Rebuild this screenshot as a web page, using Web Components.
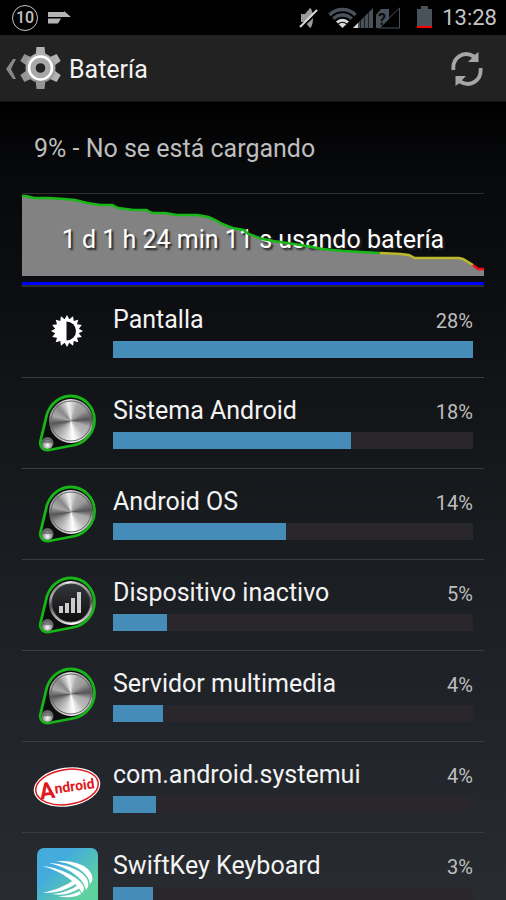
<!DOCTYPE html>
<html lang="es">
<head>
<meta charset="utf-8">
<meta name="viewport" content="width=device-width, initial-scale=1">
<title>Batería</title>
<style>
  html {
    height: 100%;
    background: #000;
  }
  body {
    margin: 0;
    height: 100%;
    overflow: hidden;
    color: #f3f3f3;
    font-family: Roboto, "Noto Sans", sans-serif;
    font-size: 25px;
    line-height: 32px;
  }
</style>
</head>
<body>
<battery-screen>
  <status-bar slot="status" time="13:28" count="10"></status-bar>
  <action-bar slot="header">Batería</action-bar>
  <battery-history status="9% - No se está cargando">1 d 1 h 24 min 11 s usando batería</battery-history>
  <battery-list>
    <battery-item name="Pantalla" percent="28" level="100"><brightness-icon slot="icon"></brightness-icon></battery-item>
    <battery-item name="Sistema Android" percent="18" level="66"><dial-icon slot="icon"></dial-icon></battery-item>
    <battery-item name="Android OS" percent="14" level="48"><dial-icon slot="icon"></dial-icon></battery-item>
    <battery-item name="Dispositivo inactivo" percent="5" level="15"><dial-icon slot="icon" signal></dial-icon></battery-item>
    <battery-item name="Servidor multimedia" percent="4" level="14"><dial-icon slot="icon"></dial-icon></battery-item>
    <battery-item name="com.android.systemui" percent="4" level="12"><android-icon slot="icon"></android-icon></battery-item>
    <battery-item name="SwiftKey Keyboard" percent="3" level="11"><swiftkey-icon slot="icon"></swiftkey-icon></battery-item>
  </battery-list>
</battery-screen>

<script>
  // Attach an open shadow root and fill it from a template
  function render(host, html) {
    const template = document.createElement("template");
    template.innerHTML = html;
    host.attachShadow({ mode: "open" }).appendChild(template.content.cloneNode(true));
  }

  class BatteryScreen extends HTMLElement {
    connectedCallback() {
      render(this, `
        <style>
          :host {
            display: flex;
            flex-direction: column;
            height: 100%;
          }
          main {
            flex: 1;
            min-height: 0;
            overflow: hidden;
            padding: 0 22px;
            background: linear-gradient(#000 0, #07080a 8%, #0e0f12 27%, #14171a 42%, #1b1e22 60%, #22262c 82%, #282c31 100%);
          }
        </style>
        <slot name="status"></slot>
        <slot name="header"></slot>
        <main><slot></slot></main>
      `);
    }
  }

  class StatusBar extends HTMLElement {
    connectedCallback() {
      render(this, `
        <style>
          :host {
            display: flex;
            justify-content: space-between;
            height: 35px;
            padding: 0 9px 0 12px;
            background: #000;
            color: #c4c4c4;
          }
          .group {
            display: flex;
            align-items: center;
          }
          .left { gap: 10px; }
          .count {
            box-sizing: border-box;
            width: 26px;
            height: 26px;
            border: 1px solid #c4c4c4;
            border-radius: 50%;
            font-size: 16px;
            font-weight: 500;
            line-height: 24px;
            text-align: center;
          }
          .battery { margin: 0 10px 0 16px; }
          time {
            font-size: 22px;
            line-height: 24px;
          }
        </style>
        <div class="group left">
          <span class="count">${this.getAttribute("count")}</span>
          <svg width="23" height="14" viewBox="0 0 23 14" fill="#b4b4b4">
            <path d="M0 1H16V0L23 6H0Z"/>
            <path d="M0 7.500H13L10 12.500H0Z"/>
          </svg>
        </div>
        <div class="group">
          <svg width="102" height="24" viewBox="0 0 102 24">
            <!-- muted speaker -->
            <path d="M2 8H6L11 2C15 4 15 20 11 22L6 16H2Z" fill="#9a9a9a"/>
            <path d="M1 23L20 5" stroke="#000" stroke-width="2"/>
            <path d="M1 21L18 4" stroke="#d8d8d8" stroke-width="2"/>
            <!-- wifi, one band lit -->
            <g fill="none">
              <path d="M30.500 9A18.400 18.400 0 0 1 56.500 9" stroke="#49525a" stroke-width="3.500"/>
              <path d="M34.300 12.800A13 13 0 0 1 52.700 12.800" stroke="#49525a" stroke-width="3.500"/>
              <path d="M38 16.500A8 8 0 0 1 49 16.500" stroke="#d8d8d8" stroke-width="3"/>
            </g>
            <path d="M39.700 18.200A5.400 5.400 0 0 1 47.300 18.200L43.500 22Z" fill="#d8d8d8"/>
            <!-- mobile signal -->
            <path d="M54 22L74 2V22Z" fill="#49525a"/>
            <path d="M54 22L59 17V22Z" fill="#d8d8d8"/>
            <path d="M61.500 14V22M65.500 10V22M69.500 6V22" stroke="#1c2126"/>
            <!-- unknown sim -->
            <path d="M77 9L82 3H90V13L81 22H77Z" fill="#49525a"/>
            <path d="M80 22L100.500 2V22Z" fill="none" stroke="#49525a"/>
            <text x="79" y="19" font-size="16" font-weight="700" fill="#0b0d0f">?</text>
          </svg>
          <svg class="battery" width="15" height="24" viewBox="0 0 15 24">
            <path d="M0 3H4V0H11V3H15V22H0Z" fill="#49525a"/>
            <path d="M0 20H15V22H0Z" fill="#f00"/>
          </svg>
          <time>${this.getAttribute("time")}</time>
        </div>
      `);
    }
  }

  class ActionBar extends HTMLElement {
    connectedCallback() {
      render(this, `
        <style>
          :host {
            display: flex;
            align-items: center;
            justify-content: space-between;
            height: 66px;
            padding: 0 22px 0 6px;
            background: #222;
            border-bottom: 1px solid #111;
          }
          a {
            display: flex;
            align-items: center;
          }
          h1 {
            flex: 1;
            margin: 4px 0 0 8px;
            font-size: 25px;
            font-weight: 400;
          }
          button {
            display: flex;
            padding: 0;
            border: 0;
            background: none;
          }
        </style>
        <a href="#" aria-label="Atrás">
          <svg width="14" height="44" viewBox="0 0 14 44">
            <path d="M7 13H10L5 23L10 33H7L0 23Z" fill="#888"/>
          </svg>
          <svg width="41" height="44" viewBox="0 0 41 44">
            <defs>
              <linearGradient id="steel" x2="0" y2="1">
                <stop offset="0" stop-color="#b4b4b4"/>
                <stop offset="1" stop-color="#929292"/>
              </linearGradient>
            </defs>
            <g fill="url(#steel)">
              <path d="M15.500 10L16.500 1H24.500L25.500 10V34L24.500 43H16.500L15.500 34Z"/>
              <path d="M15.500 10L16.500 1H24.500L25.500 10V34L24.500 43H16.500L15.500 34Z" transform="rotate(60 20.500 22)"/>
              <path d="M15.500 10L16.500 1H24.500L25.500 10V34L24.500 43H16.500L15.500 34Z" transform="rotate(120 20.500 22)"/>
              <circle cx="20.500" cy="22" r="15"/>
            </g>
            <circle cx="20.500" cy="22" r="11.500" fill="#a8a8a8" stroke="#fff" stroke-width="2.500"/>
            <circle cx="20.500" cy="22" r="4.800" fill="#222"/>
          </svg>
        </a>
        <h1><slot></slot></h1>
        <button type="button" aria-label="Actualizar">
          <svg width="34" height="36" viewBox="0 0 34 36">
            <g id="half">
              <path d="M3.500 20C2 8 13 0 24 6.500" fill="none" stroke="#a6a6a6" stroke-width="3.800"/>
              <path d="M28.500 2V12H18L21 9L24.500 5Z" fill="#a6a6a6"/>
            </g>
            <use href="#half" transform="rotate(180 17 19)"/>
          </svg>
        </button>
      `);
    }
  }

  class BatteryHistory extends HTMLElement {
    connectedCallback() {
      // Charge level over time, split where the colour of the line changes
      const good = "0,2 4,2 12,4 26,4 42,5 53,6 65,9 78,11 90,11 96,14 111,16 124,16 130,19 143,19 154,21 175,21 186,23 193,26 200,30 210,34 221,36 226,40 240,45 251,47 278,51 300,55 320,57 357,59";
      const low = "357,59 378,60 386,61 392,64 436,64 440,65 450,71";
      const critical = "450,71 455,75 461,75";

      render(this, `
        <style>
          :host { display: block; }
          p {
            margin: 0;
            padding: 31px 12px 28px;
            color: #bebebe;
          }
          figure {
            display: grid;
            align-items: center;
            height: 82px;
            margin: 0;
            padding-bottom: 6px;
            border-top: 1px solid #2c2f32;
          }
          figure > * { grid-area: 1 / 1; }
          figcaption {
            padding-top: 10px;
            color: #fff;
            text-align: center;
            text-shadow: 2px 2px 2px #222;
            white-space: nowrap;
          }
          svg {
            width: 100%;
            height: 82px;
          }
          .charging {
            height: 3px;
            background: #00f;
            border-bottom: 2px solid #2c2f32;
          }
        </style>
        <p>${this.getAttribute("status")}</p>
        <figure>
          <svg viewBox="0 0 461 82" preserveAspectRatio="none">
            <polygon points="${good} ${low} ${critical} 461,82 0,82" fill="#828282"/>
          </svg>
          <figcaption><slot></slot></figcaption>
          <svg viewBox="0 0 461 82" preserveAspectRatio="none" fill="none" stroke-width="2.500">
            <polyline points="${good}" stroke="#18b818"/>
            <polyline points="${low}" stroke="#bcb928"/>
            <polyline points="${critical}" stroke="#f01010"/>
          </svg>
        </figure>
        <div class="charging"></div>
      `);
    }
  }

  class BatteryList extends HTMLElement {
    connectedCallback() {
      this.setAttribute("role", "list");
      render(this, `
        <style>
          :host { display: block; }
        </style>
        <slot></slot>
      `);
    }
  }

  class BatteryItem extends HTMLElement {
    connectedCallback() {
      const name = this.getAttribute("name");
      this.setAttribute("role", "listitem");
      render(this, `
        <style>
          :host {
            display: grid;
            grid-template-columns: 68px 1fr;
            gap: 12px;
            align-items: center;
            box-sizing: border-box;
            height: 91px;
            padding: 0 11px;
            border-bottom: 1px solid #3a3d42;
          }
          .icon {
            display: flex;
            justify-content: center;
          }
          .usage { padding-bottom: 3px; }
          .head {
            display: flex;
            align-items: baseline;
            justify-content: space-between;
            margin-bottom: 4px;
          }
          .percent {
            color: #bebebe;
            font-size: 20px;
          }
          progress {
            display: block;
            width: 100%;
            height: 17px;
            border: 0;
            appearance: none;
            background: #29262c;
          }
          progress::-webkit-progress-bar { background: #29262c; }
          progress::-webkit-progress-value { background: #468cb9; }
        </style>
        <div class="icon"><slot name="icon"></slot></div>
        <div class="usage">
          <div class="head">
            <label for="level">${name}</label>
            <span class="percent">${this.getAttribute("percent")}%</span>
          </div>
          <progress id="level" max="100" value="${this.getAttribute("level")}"></progress>
        </div>
      `);
    }
  }

  class BrightnessIcon extends HTMLElement {
    connectedCallback() {
      // 16 rays around the disc
      const points = [];
      for (let i = 0; i < 32; i++) {
        const r = i % 2 ? 12 : 16;
        const a = (i * Math.PI) / 16;
        points.push((16 + r * Math.sin(a)).toFixed(1) + "," + (16 - r * Math.cos(a)).toFixed(1));
      }
      render(this, `
        <style>
          :host { display: block; }
          svg { display: block; }
        </style>
        <svg width="32" height="34" viewBox="0 0 32 34">
          <polygon points="${points.join(" ")}" fill="#fff"/>
          <path d="M15.500 6.500A9.500 9.500 0 0 1 15.500 25.500Z" fill="#0f1114"/>
        </svg>
      `);
    }
  }

  class DialIcon extends HTMLElement {
    connectedCallback() {
      const face = this.hasAttribute("signal")
        ? `<circle cx="33" cy="27" r="19" fill="url(#dark)" stroke="#333" stroke-width="1"/>
           <path d="M21 37V30H25V37ZM27 37V27H31V37ZM33 37V22H37V37ZM39 37V16H43V37Z" fill="#ccc"/>`
        : `<circle cx="33" cy="27" r="20" fill="none" stroke="#666" stroke-width="1"/>`;
      render(this, `
        <style>
          :host { display: block; }
          svg { display: block; }
          .metal {
            width: 44px;
            height: 44px;
            border-radius: 50%;
            background: conic-gradient(from -8deg, #eee, #aaa 30deg, #999 60deg, #555 93deg, #aaa 115deg, #bbb 145deg, #fff 180deg, #ccc 210deg, #999 245deg, #555 270deg, #aaa 295deg, #888 325deg, #eee);
          }
        </style>
        <svg width="58" height="58" viewBox="0 0 58 58">
          <defs>
            <linearGradient id="dark" x2="0" y2="1">
              <stop offset="0" stop-color="#35373c"/>
              <stop offset="1" stop-color="#0c0c0e"/>
            </linearGradient>
            <radialGradient id="knob" cy=".7">
              <stop offset="0" stop-color="#fff"/>
              <stop offset=".6" stop-color="#aaa"/>
              <stop offset="1" stop-color="#666"/>
            </radialGradient>
          </defs>
          <path d="M9 20C13 9 22 2 33 2C46 2 56.500 13 56.500 26C56.500 38 48 48 37 51L11 56C6 57 1 53 2.500 47Z" fill="#0c0d0f" stroke="#17b517" stroke-width="2.800"/>
          <foreignObject x="11" y="5" width="44" height="44"><div class="metal"></div></foreignObject>
          ${face}
          <circle cx="9.500" cy="49" r="6" fill="url(#knob)"/>
          <path d="M5 48H14" stroke="#555"/>
        </svg>
      `);
    }
  }

  class AndroidIcon extends HTMLElement {
    connectedCallback() {
      render(this, `
        <style>
          :host { display: block; }
          svg { display: block; }
        </style>
        <svg width="68" height="42" viewBox="0 0 68 42">
          <g transform="rotate(-8 34 21)">
            <ellipse cx="34" cy="21" rx="33.500" ry="19.500" fill="#fff"/>
            <ellipse cx="34" cy="21" rx="31.500" ry="17.500" fill="none" stroke="#e01820" stroke-width="1.500"/>
            <text x="6" y="30" font-family="Roboto, sans-serif" font-size="14" font-weight="700" fill="#e01820"><tspan font-size="23">A</tspan><tspan y="26">ndroid</tspan></text>
          </g>
        </svg>
      `);
    }
  }

  class SwiftkeyIcon extends HTMLElement {
    connectedCallback() {
      render(this, `
        <style>
          :host { display: block; }
          svg { display: block; }
        </style>
        <svg width="61" height="61" viewBox="0 0 61 61">
          <defs>
            <linearGradient id="sky" x2="1" y2="1">
              <stop offset=".3" stop-color="#43acdd"/>
              <stop offset=".75" stop-color="#5fd0a0"/>
            </linearGradient>
          </defs>
          <rect width="61" height="61" rx="7" fill="url(#sky)"/>
          <g fill="#fff">
            <path d="M19 13C38 12 53 18 55 28C56 31 55 34 53 36C52 25 38 16 19 13Z"/>
            <path d="M12 15C32 16 50 25 51 34C52 37 51 40 49 42C47 31 33 20 12 15Z"/>
            <path d="M6 18C26 20 46 32 47 40C47 42 46 44 45 45C39 34 26 24 6 18Z"/>
            <path d="M6 45C18 42 28 38 37 32L40 35C30 42 20 45 6 45Z"/>
            <path d="M15 46C26 45 34 42 41 37L43 40C35 45 27 48 15 46Z"/>
            <path d="M21 48C30 48 37 46 43 43L44 46C37 50 29 50 21 48Z"/>
          </g>
        </svg>
      `);
    }
  }

  customElements.define("battery-screen", BatteryScreen);
  customElements.define("status-bar", StatusBar);
  customElements.define("action-bar", ActionBar);
  customElements.define("battery-history", BatteryHistory);
  customElements.define("battery-list", BatteryList);
  customElements.define("battery-item", BatteryItem);
  customElements.define("brightness-icon", BrightnessIcon);
  customElements.define("dial-icon", DialIcon);
  customElements.define("android-icon", AndroidIcon);
  customElements.define("swiftkey-icon", SwiftkeyIcon);
</script>
</body>
</html>
